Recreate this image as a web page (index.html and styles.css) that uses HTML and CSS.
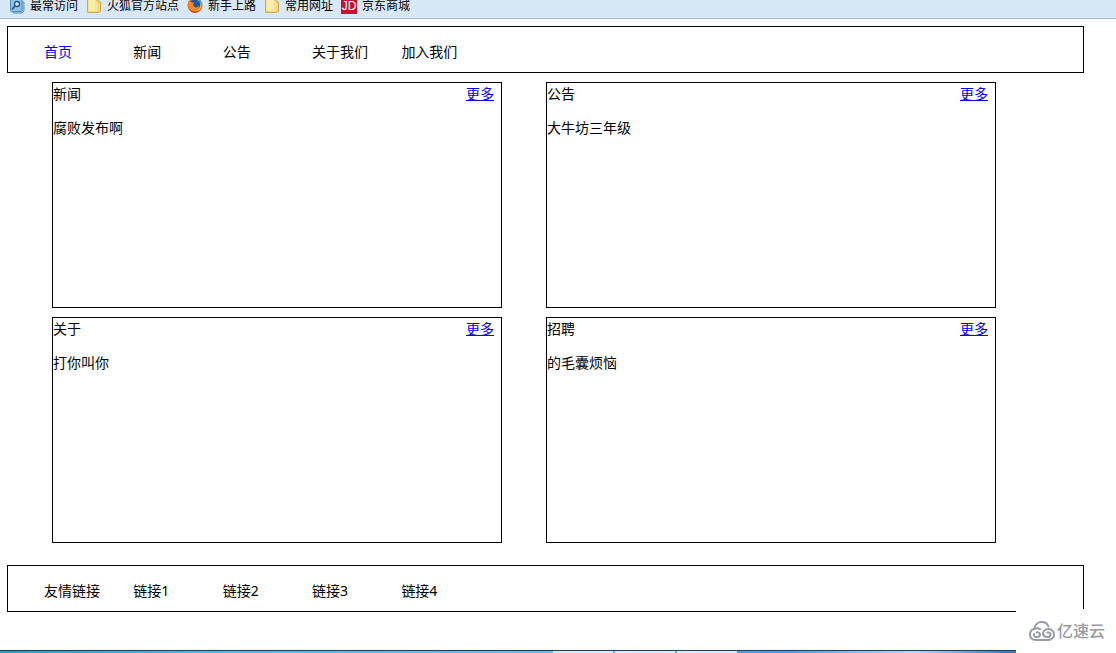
FILE: index.html
```html
<!DOCTYPE html>
<html lang="zh-CN">
<head>
<meta charset="utf-8">
<title>首页</title>
<link rel="stylesheet" href="styles.css">
</head>
<body>
<nav class="bookmarks" aria-label="书签">
  <a class="bookmark" href="#">
    <svg class="icon" viewBox="0 0 16 16" aria-hidden="true"><path d="M11 4h4v9l-2 2H4v-2z" fill="#a9cde6" stroke="#5b93bb"/><rect x="1.500" y="0.500" width="11.500" height="13" rx="1" fill="#8fc1e3" stroke="#4f8bb8"/><circle cx="8" cy="6" r="2.500" fill="#d9effb" stroke="#225c8c" stroke-width="1.400"/><path d="M6 8l-3 3.500" stroke="#225c8c" stroke-width="1.800"/></svg>
    <span>最常访问</span>
  </a>
  <a class="bookmark" href="#">
    <svg class="icon" viewBox="0 0 16 16" aria-hidden="true"><path d="M1.500 0h9l1.500 3 2.500 1v9.500l-2 1h-11z" fill="#f3d774" stroke="#cda94b"/><path d="M2.500 1h7v12h-7z" fill="#fbecaa"/><path d="M11 4v9" stroke="#fff3c4"/></svg>
    <span>火狐官方站点</span>
  </a>
  <a class="bookmark" href="#">
    <svg class="icon" viewBox="0 0 16 16" aria-hidden="true"><circle cx="8" cy="7.500" r="7.500" fill="#e0581b"/><circle cx="9" cy="6" r="5.500" fill="#24579c"/><path d="M10 1c3 1 4.500 3 4 6" fill="none" stroke="#5aa4d8" stroke-width="2"/><path d="M1 3c1 0 2 0 3 1l3 1-1 2c1 3 4 3 6 1 0 4-4 6-7 5S1 9 1 3z" fill="#f08a22"/><path d="M14 5c2 5-2 9-7 8 4 0 6-3 7-8z" fill="#f9c63a"/><path d="M1 8c1 5 6 7 10 5-2 2-8 3-10-5z" fill="#b92b18"/></svg>
    <span>新手上路</span>
  </a>
  <a class="bookmark" href="#">
    <svg class="icon" viewBox="0 0 16 16" aria-hidden="true"><path d="M1.500 0h9l1.500 3 2.500 1v9.500l-2 1h-11z" fill="#f3d774" stroke="#cda94b"/><path d="M2.500 1h7v12h-7z" fill="#fbecaa"/><path d="M11 4v9" stroke="#fff3c4"/></svg>
    <span>常用网址</span>
  </a>
  <a class="bookmark" href="#">
    <span class="icon jd">JD</span>
    <span>京东商城</span>
  </a>
</nav>

<div class="page">
  <nav class="bar">
    <ul class="bar-list">
      <li><a class="current" href="#">首页</a></li>
      <li><a href="#">新闻</a></li>
      <li><a href="#">公告</a></li>
      <li><a href="#">关于我们</a></li>
      <li><a href="#">加入我们</a></li>
    </ul>
  </nav>

  <main class="cards">
    <section class="card">
      <header class="card-head"><span>新闻</span><a class="more" href="#">更多</a></header>
      <p class="card-text">腐败发布啊</p>
    </section>
    <section class="card">
      <header class="card-head"><span>公告</span><a class="more" href="#">更多</a></header>
      <p class="card-text">大牛坊三年级</p>
    </section>
    <section class="card">
      <header class="card-head"><span>关于</span><a class="more" href="#">更多</a></header>
      <p class="card-text">打你叫你</p>
    </section>
    <section class="card">
      <header class="card-head"><span>招聘</span><a class="more" href="#">更多</a></header>
      <p class="card-text">的毛囊烦恼</p>
    </section>
  </main>

  <footer class="bar">
    <ul class="bar-list">
      <li>友情链接</li>
      <li><a href="#">链接1</a></li>
      <li><a href="#">链接2</a></li>
      <li><a href="#">链接3</a></li>
      <li><a href="#">链接4</a></li>
    </ul>
  </footer>
</div>

<div class="taskbar"><span class="task"></span><span class="task"></span><span class="task"></span></div>

<div class="watermark">
  <svg class="cloud" viewBox="0 0 26 20" aria-hidden="true"><g fill="none" stroke="#979ba2" stroke-width="2" stroke-linecap="round" stroke-linejoin="round"><path d="M5.500 7.500C6 3.500 9 1 12.500 1c3.500 0 6 1.500 7 4.500"/><path d="M7.500 11.500c2-.5 3.500.5 3.500 2s-1.500 2.500-3.500 2.500S4.500 14.500 5 13"/><path d="M11 8C9.500 7.200 8 7 6.500 7.500 3 8 1 10.500 1 13.500 1 17 3.500 19 7 19h12c3.500 0 6-2.500 6-5.500S22.500 8 19.500 8 14 10 14 13"/><path d="M18.500 11.500c2-.3 3 .7 3 2s-1 2.500-3 2.500-4-1-4.500-3"/></g></svg>
  <span>亿速云</span>
</div>
</body>
</html>
```
FILE: styles.css
```css
* {
  box-sizing: border-box;
}

body {
  display: flex;
  flex-direction: column;
  min-height: 100vh;
  margin: 0;
  background: #fff;
  color: #000;
  font-family: "Noto Sans", "Noto Sans CJK SC", sans-serif;
  font-size: 14px;
  line-height: 20px;
}

a {
  color: inherit;
  text-decoration: none;
}

/* bookmarks strip */
.bookmarks {
  display: flex;
  align-items: center;
  gap: 8px;
  height: 19px;
  padding: 0 9px 6px;
  background: #d9e8f7;
  border-bottom: 1px solid #a9b7c4;
  font-size: 12px;
  line-height: 12px;
}

.bookmark {
  display: flex;
  align-items: center;
  gap: 5px;
  white-space: nowrap;
}

.icon {
  width: 16px;
  height: 16px;
  flex: none;
}

.jd {
  background: #c4122f;
  color: #fff;
  font-family: "Liberation Sans", sans-serif;
  line-height: 16px;
  text-align: center;
}

/* page */
.page {
  margin: 7px 32px 0 7px;
}

.bar {
  border: 1px solid #000;
  padding: 15px 0 10px 36px;
}

.bar-list {
  display: flex;
  margin: 0;
  padding: 0;
  list-style: none;
}

.bar-list li {
  width: 8.6%;
  white-space: nowrap;
}

.current {
  color: #00e;
}

.cards {
  display: grid;
  grid-template-columns: 1fr 1fr;
  gap: 9px 44px;
  margin: 9px 88px 22px 45px;
}

.card {
  min-height: 226px;
  border: 1px solid #000;
}

.card-head {
  display: flex;
  justify-content: space-between;
  padding: 1px 7px 0 0;
}

.card-text {
  margin: 14px 0 0;
}

.more {
  color: #00e;
  text-decoration: underline;
}

/* desktop taskbar edge */
.taskbar {
  display: flex;
  justify-content: center;
  gap: 2px;
  height: 3px;
  margin-top: auto;
  padding-left: 174px;
  border-top: 1px solid #173f63;
  background: linear-gradient(90deg, #2b9dbd, #5ab8e4 20%, #6fbbe8 50%, #4a9ae6 70%, #b5dbfa 82%, #3c7cc4 90%, #2f66ad);
}

.task {
  width: 60px;
  background: #d8eefc;
}

.watermark {
  position: fixed;
  right: 0;
  bottom: 0;
  display: flex;
  align-items: center;
  justify-content: center;
  gap: 2px;
  width: 100px;
  height: 44px;
  padding-left: 2px;
  background: #fff;
  color: #979ba2;
  font-size: 16px;
  font-weight: 500;
}

.cloud {
  width: 26px;
  height: 20px;
}
```
